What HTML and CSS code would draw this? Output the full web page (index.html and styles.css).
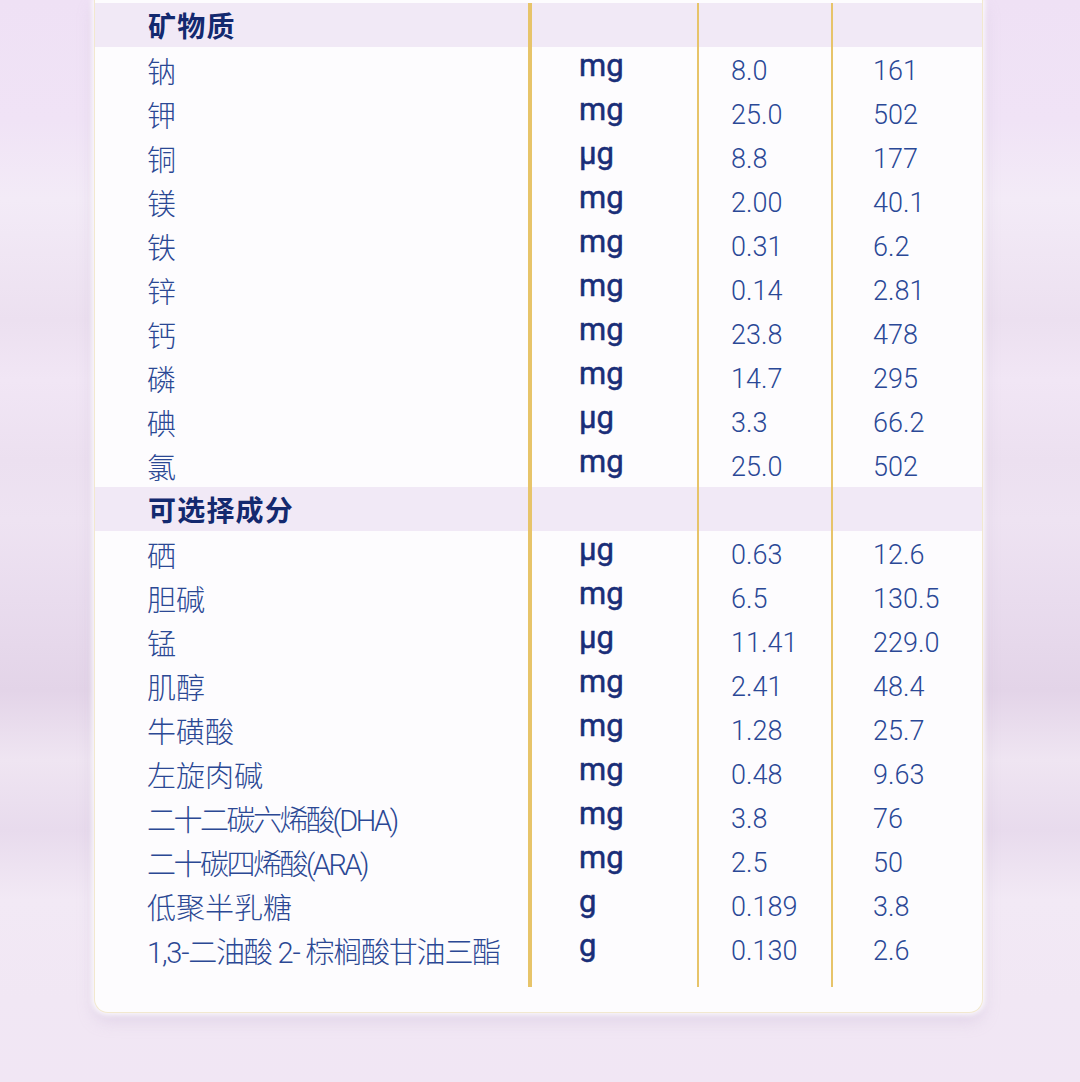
FILE: index.html
```html
<!DOCTYPE html>
<html lang="zh-CN">
<head>
<meta charset="utf-8">
<title>营养成分表</title>
<link rel="stylesheet" href="styles.css">
</head>
<body>
<div class="page">
  <div class="card">
    <div class="table">
      <div class="row head"><div class="c name">矿物质</div><div class="c unit"></div><div class="c v1"></div><div class="c v2"></div></div>
      <div class="row"><div class="c name">钠</div><div class="c unit">mg</div><div class="c v1">8.0</div><div class="c v2">161</div></div>
      <div class="row"><div class="c name">钾</div><div class="c unit">mg</div><div class="c v1">25.0</div><div class="c v2">502</div></div>
      <div class="row"><div class="c name">铜</div><div class="c unit">µg</div><div class="c v1">8.8</div><div class="c v2">177</div></div>
      <div class="row"><div class="c name">镁</div><div class="c unit">mg</div><div class="c v1">2.00</div><div class="c v2">40.1</div></div>
      <div class="row"><div class="c name">铁</div><div class="c unit">mg</div><div class="c v1">0.31</div><div class="c v2">6.2</div></div>
      <div class="row"><div class="c name">锌</div><div class="c unit">mg</div><div class="c v1">0.14</div><div class="c v2">2.81</div></div>
      <div class="row"><div class="c name">钙</div><div class="c unit">mg</div><div class="c v1">23.8</div><div class="c v2">478</div></div>
      <div class="row"><div class="c name">磷</div><div class="c unit">mg</div><div class="c v1">14.7</div><div class="c v2">295</div></div>
      <div class="row"><div class="c name">碘</div><div class="c unit">µg</div><div class="c v1">3.3</div><div class="c v2">66.2</div></div>
      <div class="row"><div class="c name">氯</div><div class="c unit">mg</div><div class="c v1">25.0</div><div class="c v2">502</div></div>
      <div class="row head"><div class="c name">可选择成分</div><div class="c unit"></div><div class="c v1"></div><div class="c v2"></div></div>
      <div class="row"><div class="c name">硒</div><div class="c unit">µg</div><div class="c v1">0.63</div><div class="c v2">12.6</div></div>
      <div class="row"><div class="c name">胆碱</div><div class="c unit">mg</div><div class="c v1">6.5</div><div class="c v2">130.5</div></div>
      <div class="row"><div class="c name">锰</div><div class="c unit">µg</div><div class="c v1">11.41</div><div class="c v2">229.0</div></div>
      <div class="row"><div class="c name">肌醇</div><div class="c unit">mg</div><div class="c v1">2.41</div><div class="c v2">48.4</div></div>
      <div class="row"><div class="c name">牛磺酸</div><div class="c unit">mg</div><div class="c v1">1.28</div><div class="c v2">25.7</div></div>
      <div class="row"><div class="c name">左旋肉碱</div><div class="c unit">mg</div><div class="c v1">0.48</div><div class="c v2">9.63</div></div>
      <div class="row"><div class="c name tight3">二十二碳六烯酸(DHA)</div><div class="c unit">mg</div><div class="c v1">3.8</div><div class="c v2">76</div></div>
      <div class="row"><div class="c name tight3">二十碳四烯酸(ARA)</div><div class="c unit">mg</div><div class="c v1">2.5</div><div class="c v2">50</div></div>
      <div class="row"><div class="c name">低聚半乳糖</div><div class="c unit">g</div><div class="c v1">0.189</div><div class="c v2">3.8</div></div>
      <div class="row"><div class="c name tight2">1,3-二油酸 2- 棕榈酸甘油三酯</div><div class="c unit">g</div><div class="c v1">0.130</div><div class="c v2">2.6</div></div>
      <div class="row tail"><div class="c name"></div><div class="c unit"></div><div class="c v1"></div><div class="c v2"></div></div>
    </div>
  </div>
</div>
</body>
</html>
```
FILE: styles.css
```css
html, body {
  margin: 0;
  padding: 0;
}
body {
  width: 1080px;
  height: 1082px;
  overflow: hidden;
  background: linear-gradient(180deg,
    #efe1f5 0px,
    #f0e3f6 120px,
    #f3ebf7 200px,
    #ece0f0 320px,
    #f1e6f5 380px,
    #ece0f0 460px,
    #eee3f2 520px,
    #e9dcee 600px,
    #e3d4e8 690px,
    #efe5f2 760px,
    #e8dbed 830px,
    #f2e9f5 900px,
    #f1e7f4 1000px,
    #f1e6f4 1082px);
  font-family: "Roboto", "Noto Sans CJK SC", sans-serif;
}
.page {
  padding-left: 94px;
}
.card {
  width: 887px;
  padding-top: 3px;
  padding-bottom: 25px;
  background: #fdfcfe;
  border: 1px solid #f2e8cf;
  border-top: none;
  border-radius: 0 0 14px 14px;
  box-shadow: 0 0 5px 2px rgba(255, 255, 255, 0.85), 0 8px 16px rgba(196, 176, 210, 0.35);
}
.row {
  display: grid;
  grid-template-columns: 433px 169px 134px 1fr;
  height: 44px;
}
.row.head {
  background: #f1e9f6;
}
.row.tail {
  height: 16px;
}
.c {
  display: flex;
  align-items: center;
  white-space: nowrap;
}
.unit {
  border-left: 4px solid #e7c46a;
  padding-left: 47px;
  padding-bottom: 8px;
  font-family: "Roboto", sans-serif;
  font-weight: 400;
  font-size: 31px;
  -webkit-text-stroke: 0.5px #1a2e78;
  color: #1a2e78;
}
.v1, .v2 {
  border-left: 2px solid #e7c46a;
  padding-top: 3px;
  font-family: "Roboto", sans-serif;
  font-weight: 300;
  font-size: 27px;
  color: #2a4896;
}
.v1 {
  padding-left: 32px;
}
.v2 {
  padding-left: 40px;
}
.name {
  padding-left: 52px;
  font-size: 29px;
  font-weight: 300;
  color: #2b4894;
}
.name.tight3 {
  letter-spacing: -2.5px;
}
.name.tight2 {
  letter-spacing: -1.2px;
}
.head .name {
  padding-left: 53px;
  font-size: 28px;
  font-weight: 700;
  letter-spacing: 1.2px;
  color: #13296f;
}
```
